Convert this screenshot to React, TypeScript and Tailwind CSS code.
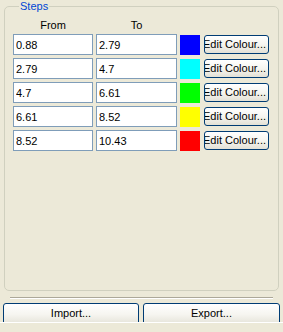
import { FC } from "react";

const steps = [
    { from: "0.88", to: "2.79", colour: "bg-[#0000FF]" },
    { from: "2.79", to: "4.7", colour: "bg-[#00FFFF]" },
    { from: "4.7", to: "6.61", colour: "bg-[#00FF00]" },
    { from: "6.61", to: "8.52", colour: "bg-[#FFFF00]" },
    { from: "8.52", to: "10.43", colour: "bg-[#FF0000]" },
];

const xpButton = "border border-[#003C74] rounded-[3px] bg-gradient-to-b from-white via-[#F6F5F0] to-[#E3E1D6] text-black text-[11px] leading-none";

const StepRow: FC<{ from: string; to: string; colour: string }> = (props) => {
    return <div className="flex items-center h-[21px]">
        <input readOnly value={props.from} className="w-[80px] h-[21px] border border-[#7F9DB9] bg-white px-[2px] text-[11px] text-black outline-none" />
        <input readOnly value={props.to} className="ml-[3px] w-[81px] h-[21px] border border-[#7F9DB9] bg-white px-[2px] text-[11px] text-black outline-none" />
        <div className={`ml-[3px] w-[20px] h-[20px] ${props.colour}`}></div>
        <button className={`ml-[4px] w-[65px] h-[19px] flex items-center justify-end overflow-hidden whitespace-nowrap pr-[2px] ${xpButton}`}>
            Edit Colour...
        </button>
    </div>
};

export default function App() {
    return <div className="w-[283px] h-[332px] bg-[#ECE9D8] flex flex-col overflow-hidden" style={{ fontFamily: '"Liberation Sans", Arial, sans-serif' }}>
        <fieldset className="ml-[4px] w-[275px] h-[291px] border border-[#D0D0BF] rounded-[5px] px-[8px]">
            <legend className="ml-[6px] px-[1px] text-[11px] leading-[13px] text-[#0046D5]">Steps</legend>
            <div className="flex mt-[4px] h-[17px] text-[11px] text-black">
                <div className="w-[80px] text-center">From</div>
                <div className="ml-[3px] w-[81px] text-center">To</div>
            </div>
            <div className="flex flex-col gap-[3px]">
                {steps.map((step) => (
                    <StepRow key={step.from} from={step.from} to={step.to} colour={step.colour} />
                ))}
            </div>
        </fieldset>
        <div className="mt-[6px] mx-[10px] h-px bg-[#ACA899]"></div>
        <div className="mx-[10px] h-px bg-white"></div>
        <div className="mt-[4px] h-[19px] overflow-hidden flex items-start px-[3px] gap-[4px]">
            <button className={`w-[136px] h-[23px] flex justify-center pt-[4px] ${xpButton}`}>Import...</button>
            <button className={`w-[137px] h-[23px] flex justify-center pt-[4px] ${xpButton}`}>Export...</button>
        </div>
        <div className="h-px bg-white"></div>
    </div>
}
